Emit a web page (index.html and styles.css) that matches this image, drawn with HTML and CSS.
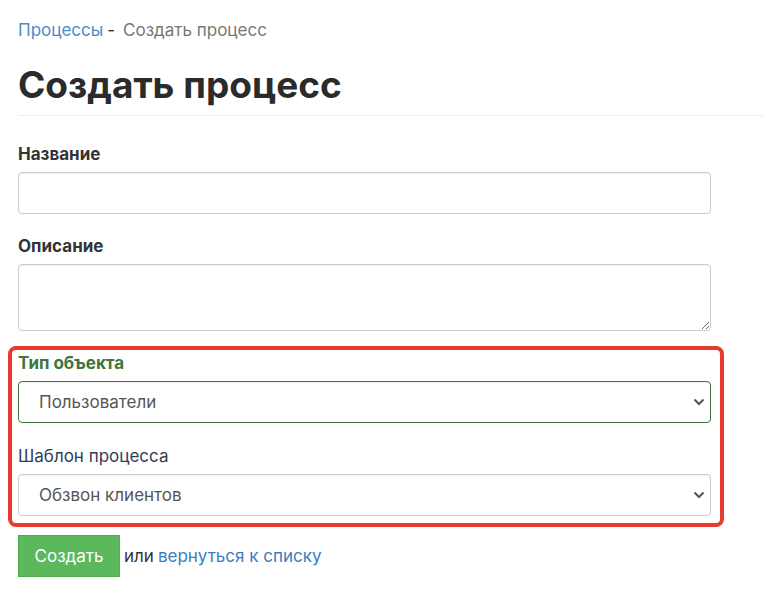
FILE: index.html
```html
<!DOCTYPE html>
<html lang="ru">
<head>
	<meta charset="UTF-8">
	<title>Создать процесс</title>
	<link rel="stylesheet" href="styles.css">
</head>
<body>
	<div id="main">
		<div class="crumbs">
			<a href="#">Процессы</a><span class="sep">-</span><span class="cur">Создать процесс</span>
		</div>
		<h1>Создать процесс</h1>

		<form class="form">
			<div class="group">
				<label>Название</label>
				<input class="field" type="text">
			</div>
			<div class="group">
				<label>Описание</label>
				<textarea class="field area"></textarea>
			</div>

			<div class="mark">
				<div class="group ok">
					<label>Тип объекта</label>
					<div class="sel">
						<select class="field">
							<option>Пользователи</option>
						</select>
						<svg class="arr" width="12" height="8" viewBox="0 0 12 8"><path d="M1.5 1.5 6 6l4.5-4.5" fill="none" stroke="#555" stroke-width="2"/></svg>
					</div>
				</div>
				<div class="group">
					<label class="thin">Шаблон процесса</label>
					<div class="sel">
						<select class="field">
							<option>Обзвон клиентов</option>
						</select>
						<svg class="arr" width="12" height="8" viewBox="0 0 12 8"><path d="M1.5 1.5 6 6l4.5-4.5" fill="none" stroke="#555" stroke-width="2"/></svg>
					</div>
				</div>
			</div>

			<div class="actions">
				<button class="btn" type="button">Создать</button>
				<span>или</span>
				<a href="#">вернуться к списку</a>
			</div>
		</form>
	</div>
</body>
</html>
```

FILE: styles.css
```css
*{
	margin: 0;
	padding: 0;
	box-sizing: border-box;
}
body{
	font-family: Inter, "Noto Sans", sans-serif;
	font-size: 17px;
	color: #333;
	background: #fff;
}
a{
	color: #3a7dbf;
	text-decoration: none;
}
#main{
	padding: 19px 0 0 18px;
}
.crumbs{
	font-size: 17px;
	line-height: 22px;
	color: #333;
}
.crumbs a{
	color: #4a8cc9;
}
.crumbs .sep{
	margin: 0 8px 0 4px;
}
.crumbs .cur{
	color: #777;
}
h1{
	margin-top: 22px;
	padding-bottom: 8px;
	border-bottom: 1px solid #eee;
	font-size: 37px;
	line-height: 44px;
	font-weight: 700;
	color: #2b2b2b;
}
.form{
	width: 693px;
	padding-top: 28px;
}
.group{
	margin-bottom: 22px;
}
.group label{
	display: block;
	margin-bottom: 8px;
	font-weight: 700;
	font-size: 17px;
	line-height: 20px;
}
.group label.thin{
	font-weight: 400;
	color: #2f3c5a;
}
.field{
	display: block;
	width: 100%;
	height: 42px;
	padding: 0 20px;
	border: 1px solid #ccc;
	border-radius: 4px;
	background: #fff;
	font-family: inherit;
	font-size: 17px;
	color: #555;
	box-shadow: inset 0 1px 1px rgba(0,0,0,.06);
}
.area{
	height: 67px;
	resize: vertical;
}
.mark{
	margin: -7px -13px 0 -10px;
	padding: 3px 9px 7px 6px;
	border: 4px solid #e53b30;
	border-radius: 8px;
}
.mark .group{
	margin-bottom: 23px;
}
.mark .group:last-child{
	margin-bottom: 0;
}
.ok label{
	color: #3c763d;
}
.ok .field{
	border-color: #3c763d;
}
.sel{
	position: relative;
}
.sel select{
	appearance: none;
	-webkit-appearance: none;
}
.arr{
	position: absolute;
	right: 6px;
	top: 17px;
	pointer-events: none;
}
.actions{
	display: flex;
	align-items: center;
	gap: 4px;
	margin-top: 8px;
	font-size: 17px;
}
.btn{
	width: 102px;
	height: 42px;
	border: 1px solid #4cae4c;
	background: #5cb85c;
	color: #fff;
	font-family: inherit;
	font-size: 17px;
}
```
